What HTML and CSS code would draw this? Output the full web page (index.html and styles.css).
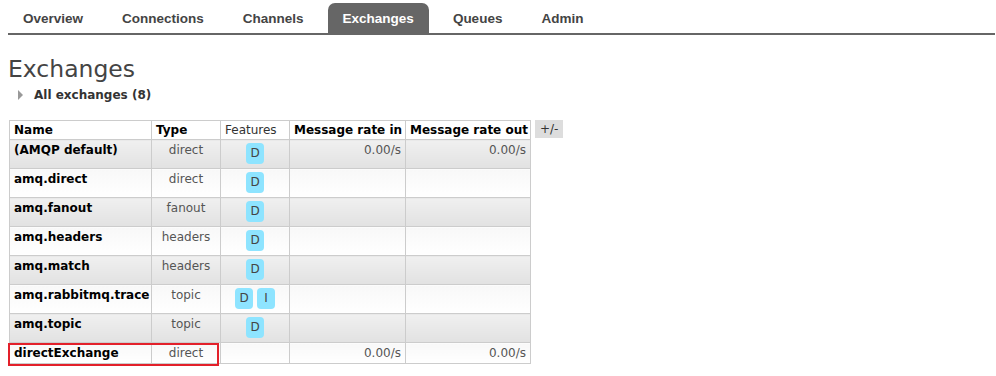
FILE: index.html
```html
<!DOCTYPE html>
<html lang="en">
<head>
    <meta charset="UTF-8">
    <title>RabbitMQ Management: Exchanges</title>
    <link rel="stylesheet" href="styles.css">
</head>
<body>
    <ul class="tabs">
        <li><a href="#">Overview</a></li>
        <li><a href="#">Connections</a></li>
        <li><a href="#">Channels</a></li>
        <li class="active"><a href="#">Exchanges</a></li>
        <li><a href="#">Queues</a></li>
        <li><a href="#">Admin</a></li>
    </ul>
    <div class="main">
        <h1>Exchanges</h1>
        <div class="section-toggle"><span class="arrow"></span>All exchanges (8)</div>
        <div class="list-wrap">
            <table class="list">
                <thead>
                    <tr>
                        <th class="c-name">Name</th>
                        <th class="c-type">Type</th>
                        <th class="c-feat plain">Features</th>
                        <th class="c-rate">Message rate in</th>
                        <th class="c-rate-out">Message rate out</th>
                    </tr>
                </thead>
                <tbody>
                    <tr class="alt1">
                        <td class="name">(AMQP default)</td>
                        <td class="type">direct</td>
                        <td class="feat"><span class="badge">D</span></td>
                        <td class="rate">0.00/s</td>
                        <td class="rate">0.00/s</td>
                    </tr>
                    <tr class="alt2">
                        <td class="name">amq.direct</td>
                        <td class="type">direct</td>
                        <td class="feat"><span class="badge">D</span></td>
                        <td class="rate"></td>
                        <td class="rate"></td>
                    </tr>
                    <tr class="alt1">
                        <td class="name">amq.fanout</td>
                        <td class="type">fanout</td>
                        <td class="feat"><span class="badge">D</span></td>
                        <td class="rate"></td>
                        <td class="rate"></td>
                    </tr>
                    <tr class="alt2">
                        <td class="name">amq.headers</td>
                        <td class="type">headers</td>
                        <td class="feat"><span class="badge">D</span></td>
                        <td class="rate"></td>
                        <td class="rate"></td>
                    </tr>
                    <tr class="alt1">
                        <td class="name">amq.match</td>
                        <td class="type">headers</td>
                        <td class="feat"><span class="badge">D</span></td>
                        <td class="rate"></td>
                        <td class="rate"></td>
                    </tr>
                    <tr class="alt2">
                        <td class="name">amq.rabbitmq.trace</td>
                        <td class="type">topic</td>
                        <td class="feat"><span class="badge">D</span><span class="badge">I</span></td>
                        <td class="rate"></td>
                        <td class="rate"></td>
                    </tr>
                    <tr class="alt1">
                        <td class="name">amq.topic</td>
                        <td class="type">topic</td>
                        <td class="feat"><span class="badge">D</span></td>
                        <td class="rate"></td>
                        <td class="rate"></td>
                    </tr>
                    <tr class="alt2 short">
                        <td class="name"><span class="mark">directExchange</span></td>
                        <td class="type">direct</td>
                        <td class="feat"></td>
                        <td class="rate">0.00/s</td>
                        <td class="rate">0.00/s</td>
                    </tr>
                </tbody>
            </table>
            <span class="col-toggle">+/-</span>
        </div>
    </div>
</body>
</html>
```

FILE: styles.css
```css
body {
    margin: 0;
    padding: 3px 1px 12px 8px;
    font-family: "DejaVu Sans", Verdana, sans-serif;
    font-size: 12px;
    color: #484848;
    background: #fff;
}
.tabs {
    list-style: none;
    margin: 0;
    padding: 0;
    display: flex;
    gap: 9px;
    border-bottom: 2px solid #666;
    height: 30px;
}
.tabs li {
    display: flex;
}
.tabs a {
    display: flex;
    align-items: center;
    padding: 0 15px;
    font-family: "Liberation Sans", Arial, sans-serif;
    font-weight: bold;
    font-size: 13.5px;
    color: #444;
    text-decoration: none;
    border-radius: 7px 7px 0 0;
}
.tabs li.active a {
    background: #666;
    color: #fff;
}
h1 {
    margin: 20px 0 0;
    font-size: 23.5px;
    font-weight: normal;
    line-height: 28px;
    color: #444;
}
.section-toggle {
    display: flex;
    align-items: center;
    margin: 5px 0 0 10px;
    font-weight: bold;
    font-size: 12px;
    color: #333;
}
.arrow {
    width: 0;
    height: 0;
    border-top: 5px solid transparent;
    border-bottom: 5px solid transparent;
    border-left: 5px solid #999;
    margin-right: 11px;
}
.list-wrap {
    display: flex;
    align-items: flex-start;
    gap: 4px;
    margin-top: 18px;
    padding-left: 1px;
}
table.list {
    border-collapse: collapse;
    border: 1px solid #ccc;
    table-layout: fixed;
    width: 521px;
}
.list th, .list td {
    border: 1px solid #ccc;
    padding: 2px 4px;
    line-height: 14px;
    vertical-align: top;
    white-space: nowrap;
    box-sizing: border-box;
}
.list th {
    text-align: left;
    font-weight: bold;
    color: #000;
    background: #fff;
}
.list th.plain {
    font-weight: normal;
    color: #333;
}
.c-name { width: 142px; }
.c-type { width: 69px; }
.c-feat { width: 69px; }
.c-rate { width: 116px; }
.c-rate-out { width: 125px; }
.list td {
    padding-top: 3px;
    padding-bottom: 4px;
    height: 29px;
}
.list tr.short td {
    height: 20px;
    padding-bottom: 3px;
}
.list tr.alt1 td {
    background: linear-gradient(#f0f0f0, #e2e2e2);
}
.list tr.alt2 td {
    background: linear-gradient(#f8f8f8, #ffffff);
}
td.name {
    font-weight: bold;
    color: #000;
}
td.type {
    text-align: center;
    color: #555;
}
td.rate {
    text-align: right;
    color: #555;
}
td.feat {
    text-align: center;
}
.badge {
    display: inline-block;
    width: 18px;
    height: 21px;
    line-height: 21px;
    margin: 0 2px;
    border-radius: 4px;
    background: #8ee4ff;
    color: #444;
    font-size: 12px;
    text-align: center;
}
.mark {
    position: relative;
    display: inline-block;
}
.mark::after {
    content: "";
    position: absolute;
    left: -6px;
    top: -3px;
    width: 207px;
    height: 19px;
    border: 2px solid #e3202a;
    z-index: 1;
}
.col-toggle {
    display: inline-block;
    background: #ddd;
    padding: 1px 5px;
    line-height: 16px;
    color: #333;
}
```
